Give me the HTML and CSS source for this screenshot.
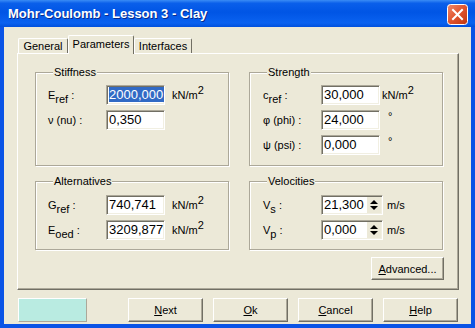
FILE: index.html
```html
<!DOCTYPE html>
<html lang="en">
<head>
    <meta charset="UTF-8">
    <title>Mohr-Coulomb - Lesson 3 - Clay</title>
    <link rel="stylesheet" href="styles.css">
</head>
<body>
<div class="window">
    <div class="titlebar">
        <span class="title">Mohr-Coulomb - Lesson 3 - Clay</span>
        <svg class="close" width="21" height="21" viewBox="0 0 21 21">
            <defs>
                <linearGradient id="red" x1="0" y1="0" x2="1" y2="1">
                    <stop offset="0" stop-color="#F08A6C"/>
                    <stop offset="0.5" stop-color="#E0542E"/>
                    <stop offset="1" stop-color="#C0350F"/>
                </linearGradient>
            </defs>
            <rect x="0.5" y="0.5" width="20" height="20" rx="3" fill="url(#red)" stroke="#fff"/>
            <path d="M6 6 L15 15 M15 6 L6 15" stroke="#fff" stroke-width="2" stroke-linecap="square"/>
        </svg>
    </div>

    <div class="client">
        <div class="tabs">
            <div class="tab tab-general">General</div>
            <div class="tab tab-params active">Parameters</div>
            <div class="tab tab-interfaces">Interfaces</div>
        </div>

        <div class="panel">
            <div class="groups">
                <!-- Stiffness -->
                <div class="group group-tall">
                    <div class="group-title">Stiffness</div>
                    <div class="rows">
                        <div class="lbl">E<sub>ref</sub> :</div>
                        <div class="field"><span class="sel">2000,000</span></div>
                        <div class="unit">kN/m<sup>2</sup></div>

                        <div class="lbl">ν (nu) :</div>
                        <div class="field">0,350</div>
                        <div class="unit"></div>
                    </div>
                </div>

                <!-- Strength -->
                <div class="group group-tall right">
                    <div class="group-title">Strength</div>
                    <div class="rows">
                        <div class="lbl">c<sub>ref</sub> :</div>
                        <div class="field">30,000</div>
                        <div class="unit">kN/m<sup>2</sup></div>

                        <div class="lbl">φ (phi) :</div>
                        <div class="field">24,000</div>
                        <div class="unit deg">°</div>

                        <div class="lbl">ψ (psi) :</div>
                        <div class="field">0,000</div>
                        <div class="unit deg">°</div>
                    </div>
                </div>

                <!-- Alternatives -->
                <div class="group group-short">
                    <div class="group-title">Alternatives</div>
                    <div class="rows">
                        <div class="lbl">G<sub>ref</sub> :</div>
                        <div class="field">740,741</div>
                        <div class="unit">kN/m<sup>2</sup></div>

                        <div class="lbl">E<sub>oed</sub> :</div>
                        <div class="field">3209,877</div>
                        <div class="unit">kN/m<sup>2</sup></div>
                    </div>
                </div>

                <!-- Velocities -->
                <div class="group group-short right">
                    <div class="group-title">Velocities</div>
                    <div class="rows spin-rows">
                        <div class="lbl">V<sub>s</sub> :</div>
                        <div class="field spin-field">
                            <span class="spin-text">21,300</span>
                            <svg class="spin" width="14" height="16" viewBox="0 0 14 16">
                                <path d="M3 7 L7 3 L11 7 Z" fill="#000"/>
                                <path d="M3 9 L11 9 L7 13 Z" fill="#000"/>
                            </svg>
                        </div>
                        <div class="unit">m/s</div>

                        <div class="lbl">V<sub>p</sub> :</div>
                        <div class="field spin-field">
                            <span class="spin-text">0,000</span>
                            <svg class="spin" width="14" height="16" viewBox="0 0 14 16">
                                <path d="M3 7 L7 3 L11 7 Z" fill="#000"/>
                                <path d="M3 9 L11 9 L7 13 Z" fill="#000"/>
                            </svg>
                        </div>
                        <div class="unit">m/s</div>
                    </div>
                </div>
            </div>

            <div class="panel-actions">
                <button class="btn btn-advanced"><u>A</u>dvanced...</button>
            </div>
        </div>

        <div class="footer">
            <div class="swatch"></div>
            <div class="footer-buttons">
                <button class="btn"><u>N</u>ext</button>
                <button class="btn"><u>O</u>k</button>
                <button class="btn"><u>C</u>ancel</button>
                <button class="btn"><u>H</u>elp</button>
            </div>
        </div>
    </div>
</div>
</body>
</html>
```

FILE: styles.css
```css
body {
    margin: 0;
    width: 475px;
    height: 328px;
    overflow: hidden;
    font-family: "Liberation Sans", Arial, sans-serif;
    font-size: 11px;
    color: #000;
}
.window {
    width: 475px;
    height: 328px;
    display: flex;
    flex-direction: column;
    background: #0A54E6;
}
.titlebar {
    height: 27px;
    flex: none;
    display: flex;
    align-items: center;
    justify-content: space-between;
    padding: 0 7px 0 8px;
    background: linear-gradient(to bottom, #3A8CF5 0%, #0A5FEA 12%, #0055E5 45%, #0A62F0 85%, #0050DD 100%);
}
.title {
    color: #fff;
    font-weight: bold;
    font-size: 13px;
    text-shadow: 1px 1px 0 #0A2A8A;
}
.close {
    display: block;
    margin-top: 1px;
}
.client {
    flex: 1;
    margin: 0 4px 4px 4px;
    background: #ECE9D8;
    padding: 8px 12px 0 13px;
}

/* tabs */
.tabs {
    display: flex;
    align-items: flex-end;
    height: 18px;
    padding-left: 1px;
}
.tab {
    box-sizing: border-box;
    height: 15px;
    line-height: 14px;
    text-align: center;
    background: #ECE9D8;
    border-top: 1px solid #fff;
    border-left: 1px solid #fff;
    border-right: 1px solid #716F64;
    border-radius: 2px 2px 0 0;
}
.tab-general { width: 50px; }
.tab-params { width: 66px; }
.tab-interfaces { width: 58px; }
.tab.active {
    height: 19px;
    line-height: 16px;
    margin-bottom: -1px;
    position: relative;
    z-index: 1;
}

/* panel */
.panel {
    box-sizing: border-box;
    width: 442px;
    height: 237px;
    border-top: 1px solid #fff;
    border-left: 1px solid #fff;
    border-right: 1px solid #716F64;
    border-bottom: 1px solid #716F64;
    box-shadow: inset -1px -1px 0 #ACA899;
    padding: 18px 14px 9px 17px;
}
.groups {
    display: grid;
    grid-template-columns: 194px 194px;
    column-gap: 20px;
    row-gap: 15px;
}
.group {
    box-sizing: border-box;
    border: 1px solid #ACA899;
    box-shadow: inset 1px 1px 0 #fff, 1px 1px 0 #fff;
    padding-left: 12px;
}
.group.right { padding-left: 13px; }
.group-tall { height: 94px; }
.group-short { height: 69px; }
.group-title {
    width: fit-content;
    margin: -7px 0 0 5px;
    padding: 0 1px;
    line-height: 13px;
    background: #ECE9D8;
}
.group.right .group-title { margin-left: 4px; }
.rows {
    display: grid;
    grid-template-columns: 58px 59px auto;
    grid-auto-rows: 20px;
    row-gap: 5px;
    margin-top: 6px;
    align-items: center;
}
.spin-rows {
    grid-template-columns: 58px 62px auto;
}
.group-short .rows { margin-top: 7px; }
.lbl {
    white-space: nowrap;
    line-height: 13px;
}
.lbl sub {
    font-size: 11px;
    vertical-align: -4px;
    line-height: 0;
}
.field {
    box-sizing: border-box;
    height: 20px;
    background: #fff;
    border: 1px solid;
    border-color: #ACA899 #fff #fff #ACA899;
    box-shadow: inset 1px 1px 0 #716F64, inset -1px -1px 0 #F1EFE2;
    padding: 1px 0 0 2px;
    font-size: 13px;
    line-height: 16px;
    white-space: nowrap;
    overflow: hidden;
}
.sel {
    background: #316AC5;
    color: #fff;
    padding-right: 2px;
}
.unit {
    margin-left: 7px;
    white-space: nowrap;
    line-height: 13px;
}
.group.right .unit { margin-left: 2px; }
.group.right .spin-rows .unit { margin-left: 4px; }
.unit sup {
    font-size: 11px;
    vertical-align: 5px;
    line-height: 0;
}
.group.right .unit.deg {
    margin-left: 8px;
    align-self: start;
    line-height: 12px;
}
.spin-field {
    display: flex;
    align-items: center;
    padding: 1px 1px 1px 2px;
}
.spin-text { flex: 1; }
.spin {
    display: block;
    background: #ECE9D8;
}

/* buttons */
.btn {
    box-sizing: border-box;
    width: 75px;
    height: 24px;
    padding: 0;
    font-family: "Liberation Sans", Arial, sans-serif;
    font-size: 11px;
    color: #000;
    background: #ECE9D8;
    border: 1px solid;
    border-color: #fff #716F64 #716F64 #fff;
    box-shadow: inset -1px -1px 0 #ACA899;
}
.panel-actions {
    display: flex;
    justify-content: flex-end;
    margin-top: 7px;
}
.btn-advanced {
    width: 73px;
    height: 23px;
}
.footer {
    display: flex;
    justify-content: space-between;
    margin-top: 8px;
    width: 441px;
}
.swatch {
    box-sizing: border-box;
    width: 69px;
    height: 24px;
    margin-left: 1px;
    background: #B9EBE1;
    border: 1px solid;
    border-color: #fff #ACA899 #ACA899 #fff;
}
.footer-buttons {
    display: flex;
    gap: 10px;
}
```
